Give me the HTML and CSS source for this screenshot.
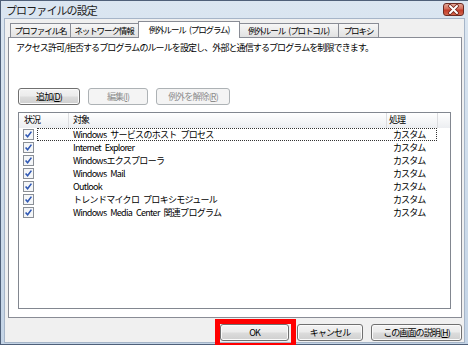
FILE: index.html
```html
<!DOCTYPE html>
<html lang="ja">
<head>
    <meta charset="UTF-8">
    <title>プロファイルの設定</title>
    <link rel="stylesheet" href="styles.css">
</head>
<body>
<div class="window">
    <div class="titlebar">
        <span class="title">プロファイルの設定</span>
        <button class="close-btn" title="閉じる">
            <svg width="19" height="11" viewBox="0 0 19 11">
                <path d="M6 2 L13 9 M13 2 L6 9" stroke="#6e241b" stroke-width="3.6" stroke-linecap="round"/>
                <path d="M6 2 L13 9 M13 2 L6 9" stroke="#ffffff" stroke-width="2" stroke-linecap="round"/>
            </svg>
        </button>
    </div>

    <div class="client">
        <div class="tabs">
            <div class="tab tab-name">プロファイル名</div>
            <div class="tab tab-net">ネットワーク情報</div>
            <div class="tab tab-prog active">例外ルール (プログラム)</div>
            <div class="tab tab-proto">例外ルール (プロトコル)</div>
            <div class="tab tab-proxy">プロキシ</div>
        </div>

        <div class="panel">
            <p class="desc">アクセス許可/拒否するプログラムのルールを設定し、外部と通信するプログラムを制限できます。</p>

            <div class="actions">
                <button class="btn">追加(<u>D</u>)</button>
                <button class="btn" disabled>編集(<u>I</u>)</button>
                <button class="btn" disabled>例外を解除(<u>R</u>)</button>
            </div>

            <div class="list">
                <div class="list-head">
                    <div class="col-status">状況</div>
                    <div class="col-target">対象</div>
                    <div class="col-action">処理</div>
                    <div class="col-fill"></div>
                </div>
                <div id="rows"></div>
            </div>
        </div>

        <div class="footer">
            <div class="ok-wrap">
                <button class="btn btn-ok">OK</button>
                <span class="mark"></span>
            </div>
            <button class="btn btn-cancel">キャンセル</button>
            <button class="btn btn-help">この画面の説明(<u>H</u>)</button>
        </div>
    </div>
</div>

<script>
    const programs = [
        'Windows サービスのホスト プロセス',
        'Internet Explorer',
        'Windowsエクスプローラ',
        'Windows Mail',
        'Outlook',
        'トレンドマイクロ プロキシモジュール',
        'Windows Media Center 関連プログラム'
    ];
    const rows = document.getElementById('rows');
    const check = '<svg width="11" height="11" viewBox="0 0 11 11">' +
        '<rect x="0.5" y="0.5" width="10" height="10" fill="#f4f6f8" stroke="#8a8f96"/>' +
        '<path d="M2.6 5.4 L4.6 7.8 L8.4 2.6" fill="none" stroke="#2f58b4" stroke-width="1.6"/></svg>';

    programs.forEach((name, i) => {
        const row = document.createElement('div');
        row.className = 'row';
        row.innerHTML =
            '<span class="chk">' + check + '</span>' +
            '<span class="row-body' + (i === 0 ? ' focused' : '') + '">' +
            '<span class="name">' + name + '</span>' +
            '<span class="kind">カスタム</span></span>';
        rows.appendChild(row);
    });
</script>
</body>
</html>
```

FILE: styles.css
```css
* {
    box-sizing: border-box;
}

body {
    margin: 0;
    width: 468px;
    height: 345px;
    overflow: hidden;
    font-family: "Noto Sans CJK JP", sans-serif;
    font-size: 9px;
    letter-spacing: -0.9px;
    word-spacing: 2.5px;
    color: #000;
}

.window {
    height: 345px;
    display: flex;
    flex-direction: column;
    padding: 0 3px 1px 3px;
    border: 1px solid #4f6079;
    border-right: none;
    background: linear-gradient(#dbe6f1, #c4d4e6);
}

.titlebar {
    height: 17px;
    display: flex;
    align-items: center;
    padding-left: 2px;
}

.title {
    font-size: 11px;
    letter-spacing: -0.9px;
    color: #1c1c1c;
}

.close-btn {
    margin-left: auto;
    margin-right: 1px;
    width: 21px;
    height: 13px;
    padding: 0;
    display: flex;
    align-items: center;
    justify-content: center;
    border: 1px solid #6b2a22;
    border-radius: 3px;
    background: linear-gradient(#e3a696 0%, #d46b58 45%, #c23a28 55%, #d2664c 100%);
}

.client {
    flex: 1;
    display: flex;
    flex-direction: column;
    border: 1px solid #a6b5c8;
    background: #f0f0f0;
}

/* tabs */
.tabs {
    display: flex;
    align-items: flex-end;
    height: 18px;
    padding: 2px 0 0 5px;
}

.tab {
    height: 14px;
    line-height: 12px;
    margin-left: -1px;
    text-align: center;
    font-size: 8.5px;
    letter-spacing: -1.1px;
    border: 1px solid #898c95;
    border-bottom: none;
    background: linear-gradient(#f6f6f6, #e2e2e2);
    white-space: nowrap;
}

.tab-name { width: 61px; margin-left: 0; }
.tab-net { width: 70px; padding-right: 2px; }
.tab-prog { width: 102px; }
.tab-proto { width: 101px; }
.tab-proxy { width: 41px; }

.tab.active {
    position: relative;
    z-index: 1;
    height: 17px;
    line-height: 14px;
    margin: 0 -1px -1px -2px;
    background: #fff;
}

.panel {
    flex: 1;
    display: flex;
    flex-direction: column;
    margin: 0 2px 0 3px;
    padding: 4px 10px 8px 7px;
    border: 1px solid #898c95;
    background: #fff;
}

.desc {
    margin: 0;
    line-height: 11px;
}

.actions {
    display: flex;
    gap: 8px;
    margin: 35px 0 7px 2px;
}

/* buttons */
.btn {
    height: 17px;
    padding: 0;
    font: inherit;
    letter-spacing: inherit;
    color: #000;
    border: 1px solid #707070;
    border-radius: 3px;
    background: linear-gradient(#f3f3f3 0%, #ebebeb 48%, #dcdcdc 52%, #cfcfcf 100%);
    box-shadow: inset 0 0 0 1px #fbfbfb;
}

.btn:disabled {
    color: #8d8d8d;
    border-color: #adb2b5;
    background: #f4f4f4;
    box-shadow: none;
}

.actions .btn:nth-child(1) { width: 62px; }
.actions .btn:nth-child(2) { width: 60px; }
.actions .btn:nth-child(3) { width: 74px; }

/* list view */
.list {
    flex: 1;
    margin-left: 2px;
    border: 1px solid #828790;
}

.list-head {
    display: flex;
    height: 15px;
    line-height: 14px;
    background: linear-gradient(#ffffff, #eceef1);
}

.list-head > div {
    border-left: 1px solid #dcdde0;
}

.list-head > .col-status {
    width: 49px;
    padding-left: 5px;
    border-left: none;
}

.col-target {
    width: 318px;
    padding-left: 4px;
}

.col-action {
    width: 51px;
    padding-left: 2px;
}

.col-fill {
    flex: 1;
}

.row {
    display: flex;
    height: 13px;
}

.chk {
    width: 18px;
    padding: 1px 0 0 4px;
}

.chk svg {
    display: block;
}

.row-body {
    width: 400px;
    display: flex;
    line-height: 11px;
    border: 1px dotted transparent;
}

.row-body.focused {
    border-color: #333;
}

.name {
    width: 355px;
    padding-left: 35px;
    letter-spacing: -0.7px;
    white-space: nowrap;
}

.kind {
    flex: 1;
}

/* dialog buttons */
.footer {
    height: 24px;
    display: flex;
    justify-content: flex-end;
    gap: 7px;
    padding: 6px 2px 0 0;
}

.ok-wrap {
    position: relative;
    display: flex;
}

.btn-ok { width: 69px; }
.btn-cancel { width: 66px; margin-left: 1px; }
.btn-help { width: 91px; margin-left: 1px; }

.mark {
    position: absolute;
    left: -5px;
    top: -5px;
    right: -7px;
    bottom: -6px;
    border: 5px solid #ff0000;
}
```
